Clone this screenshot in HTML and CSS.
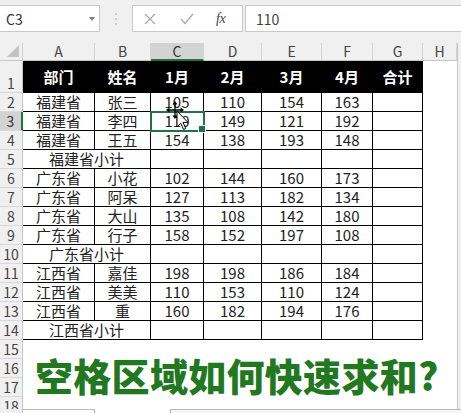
FILE: index.html
```html
<!DOCTYPE html>
<html lang="zh-CN">
<head>
<meta charset="utf-8">
<title>空格区域如何快速求和</title>
<link rel="stylesheet" href="styles.css">
</head>
<body>
<div class="app">
  <div class="formula-bar">
    <div class="name-box"><span>C3</span><span class="caret"></span></div>
    <div class="grip">
      <svg width="4" height="14" viewBox="0 0 4 14"><circle cx="2" cy="2" r="1" fill="#c4c4c4"/><circle cx="2" cy="7" r="1" fill="#c4c4c4"/><circle cx="2" cy="12" r="1" fill="#c4c4c4"/></svg>
    </div>
    <div class="fx-tools">
      <svg class="ic-x" width="12" height="12" viewBox="0 0 12 12"><path d="M1 1 L11 11 M11 1 L1 11" stroke="#ababab" stroke-width="1.3" fill="none"/></svg>
      <svg class="ic-ok" width="14" height="12" viewBox="0 0 14 12"><path d="M1 6 L5 10.5 L13 1" stroke="#ababab" stroke-width="1.4" fill="none"/></svg>
      <span class="fx">fx</span>
    </div>
    <div class="formula-input">110</div>
  </div>

  <div class="sheet">
    <div class="grid">
      <div class="corner"><span class="tri"></span></div>
      <div class="ch">A</div><div class="ch">B</div><div class="ch sel-c">C</div><div class="ch">D</div><div class="ch">E</div><div class="ch">F</div><div class="ch">G</div><div class="ch">H</div>

      <div class="rh">1</div>
      <div class="c t hd">部门</div><div class="c t hd">姓名</div><div class="c t hd">1月</div><div class="c t hd">2月</div><div class="c t hd">3月</div><div class="c t hd">4月</div><div class="c t hd">合计</div><div class="c"></div>

      <div class="rh">2</div>
      <div class="c t">福建省</div><div class="c t">张三</div><div class="c t">105</div><div class="c t">110</div><div class="c t">154</div><div class="c t">163</div><div class="c t"></div><div class="c"></div>

      <div class="rh sel-r">3</div>
      <div class="c t">福建省</div><div class="c t">李四</div><div class="c t active">110</div><div class="c t">149</div><div class="c t">121</div><div class="c t">192</div><div class="c t"></div><div class="c"></div>

      <div class="rh">4</div>
      <div class="c t">福建省</div><div class="c t">王五</div><div class="c t">154</div><div class="c t">138</div><div class="c t">193</div><div class="c t">148</div><div class="c t"></div><div class="c"></div>

      <div class="rh">5</div>
      <div class="c t m2">福建省小计</div><div class="c t"></div><div class="c t"></div><div class="c t"></div><div class="c t"></div><div class="c t"></div><div class="c"></div>

      <div class="rh">6</div>
      <div class="c t">广东省</div><div class="c t">小花</div><div class="c t">102</div><div class="c t">144</div><div class="c t">160</div><div class="c t">173</div><div class="c t"></div><div class="c"></div>

      <div class="rh">7</div>
      <div class="c t">广东省</div><div class="c t">阿呆</div><div class="c t">127</div><div class="c t">113</div><div class="c t">182</div><div class="c t">134</div><div class="c t"></div><div class="c"></div>

      <div class="rh">8</div>
      <div class="c t">广东省</div><div class="c t">大山</div><div class="c t">135</div><div class="c t">108</div><div class="c t">142</div><div class="c t">180</div><div class="c t"></div><div class="c"></div>

      <div class="rh">9</div>
      <div class="c t">广东省</div><div class="c t">行子</div><div class="c t">158</div><div class="c t">152</div><div class="c t">197</div><div class="c t">108</div><div class="c t"></div><div class="c"></div>

      <div class="rh">10</div>
      <div class="c t m2">广东省小计</div><div class="c t"></div><div class="c t"></div><div class="c t"></div><div class="c t"></div><div class="c t"></div><div class="c"></div>

      <div class="rh">11</div>
      <div class="c t">江西省</div><div class="c t">嘉佳</div><div class="c t">198</div><div class="c t">198</div><div class="c t">186</div><div class="c t">184</div><div class="c t"></div><div class="c"></div>

      <div class="rh">12</div>
      <div class="c t">江西省</div><div class="c t">美美</div><div class="c t">110</div><div class="c t">153</div><div class="c t">110</div><div class="c t">124</div><div class="c t"></div><div class="c"></div>

      <div class="rh">13</div>
      <div class="c t">江西省</div><div class="c t">重</div><div class="c t">160</div><div class="c t">182</div><div class="c t">194</div><div class="c t">176</div><div class="c t"></div><div class="c"></div>

      <div class="rh">14</div>
      <div class="c t m2">江西省小计</div><div class="c t"></div><div class="c t"></div><div class="c t"></div><div class="c t"></div><div class="c t"></div><div class="c"></div>

      <div class="rh">15</div><div class="blank"></div>
      <div class="rh">16</div><div class="blank"></div>
      <div class="rh">17</div><div class="blank"></div>
      <div class="rh">18</div><div class="blank"></div>
    </div>
    <div class="vscroll"></div>
  </div>

  <div class="tabbar">
    <span class="tb-lead"></span>
    <span class="tb-tab"></span>
    <span class="tb-gap"></span>
    <span class="tb-scroll"></span>
  </div>

  <h1 class="title">空格区域如何快速求和?</h1>

  <svg class="cursor" width="26" height="32" viewBox="0 0 26 32">
    <path d="M10 4 V16 M4 10 H16" stroke="#000" stroke-width="1.3" fill="none"/>
    <polygon points="10,1 7.5,4.5 12.5,4.5" fill="#000"/>
    <polygon points="10,19 7.5,15.5 12.5,15.5" fill="#000"/>
    <polygon points="1,10 4.5,7.5 4.5,12.5" fill="#000"/>
    <polygon points="19,10 15.5,7.5 15.5,12.5" fill="#000"/>
    <path d="M12 11 L12 27 L15.8 23.3 L18.6 29.5 L20.8 28.5 L18 22.4 L23 22.4 Z" fill="#fff" stroke="#000" stroke-width="1" stroke-linejoin="miter"/>
  </svg>
</div>
</body>
</html>
```

FILE: styles.css
```css
* { box-sizing: border-box; }

html, body {
  margin: 0;
  padding: 0;
}

body {
  width: 461px;
  height: 413px;
  overflow: hidden;
  background: #f0f0f0;
  font-family: "Noto Sans CJK SC", "Noto Sans", sans-serif;
}

.app {
  position: relative;
  width: 461px;
  height: 413px;
  display: flex;
  flex-direction: column;
  overflow: hidden;
}

/* ---------- formula bar ---------- */
.formula-bar {
  flex: none;
  height: 43px;
  display: flex;
  align-items: flex-start;
  padding-top: 5px;
}

.name-box {
  width: 100px;
  height: 27px;
  background: #fff;
  border: 1px solid #c8c8c8;
  border-left: none;
  display: flex;
  align-items: center;
  padding: 0 4px 0 6px;
  font-size: 14px;
  color: #333;
}

.caret {
  margin-left: auto;
  width: 0;
  height: 0;
  border-top: 4px solid #7d7d7d;
  border-left: 3.5px solid transparent;
  border-right: 3.5px solid transparent;
}

.grip {
  width: 32px;
  height: 27px;
  display: flex;
  align-items: center;
  justify-content: center;
}

.fx-tools {
  width: 111px;
  height: 27px;
  background: #fff;
  border: 1px solid #c8c8c8;
  display: flex;
  align-items: center;
  padding-left: 11px;
}

.ic-x { margin-right: 24px; }
.ic-ok { margin-right: 22px; }

.fx {
  font-family: "Liberation Serif", serif;
  font-style: italic;
  font-size: 14px;
  color: #444;
  letter-spacing: -0.5px;
}

.formula-input {
  flex: 1;
  margin-left: 2px;
  margin-right: -4px;
  height: 27px;
  background: #fff;
  border: 1px solid #c8c8c8;
  display: flex;
  align-items: center;
  padding-left: 10px;
  font-size: 14px;
  color: #444;
}

/* ---------- sheet ---------- */
.sheet {
  flex: 1;
  min-height: 0;
  display: flex;
}

.grid {
  display: grid;
  grid-template-columns: 23px 72px 56px 53px 58px 60px 51px 50px 34px;
  grid-template-rows: 18px 32px repeat(17, 19px);
  align-content: start;
  align-self: flex-start;
  background: #fff;
}

.vscroll {
  width: 4px;
  border-left: 1px solid #c6c6c6;
  background: #f0f0f0;
}

.corner {
  background: #f0f0f0;
  border-right: 1px solid #d0d0d0;
  border-bottom: 1px solid #c6c6c6;
  display: flex;
  justify-content: flex-end;
  align-items: flex-end;
  padding: 0 3px 3px 0;
}

.tri {
  width: 0;
  height: 0;
  border-bottom: 12px solid #c2c2c2;
  border-left: 12px solid transparent;
}

.ch {
  background: #f0f0f0;
  border-right: 1px solid #d4d4d4;
  border-bottom: 1px solid #c6c6c6;
  display: flex;
  align-items: center;
  justify-content: center;
  font-size: 14px;
  color: #444;
  line-height: 17px;
}

.ch.sel-c {
  background: #d3d3d3;
  border-bottom: 2px solid #217346;
  color: #333;
}

.rh {
  background: #f0f0f0;
  border-right: 1px solid #c6c6c6;
  border-bottom: 1px solid #d8d8d8;
  display: flex;
  align-items: flex-end;
  justify-content: center;
  font-size: 14px;
  line-height: 18px;
  color: #444;
}

.rh.sel-r {
  background: #d3d3d3;
  border-right: 2px solid #217346;
  color: #333;
}

.c {
  display: flex;
  align-items: center;
  justify-content: center;
  font-size: 15px;
  line-height: 18px;
  color: #222;
  white-space: nowrap;
}

.t {
  border-right: 1px solid #000;
  border-bottom: 1px solid #000;
}

.hd {
  background: #000;
  color: #fff;
  font-weight: 700;
}

.m2 { grid-column: span 2; }

.blank { grid-column: span 8; }

.active {
  position: relative;
  outline: 2px solid #217346;
  outline-offset: -1px;
  z-index: 2;
}

.active::after {
  content: "";
  position: absolute;
  right: -3px;
  bottom: -3px;
  width: 6px;
  height: 6px;
  background: #217346;
  border: 1px solid #fff;
}

/* ---------- bottom strip ---------- */
.tabbar {
  flex: none;
  height: 4px;
  display: flex;
  background: #fff;
  position: relative;
  z-index: 1;
}

.tb-lead { width: 23px; background: #f0f0f0; border-right: 1px solid #c6c6c6; }
.tb-tab { width: 72px; border-top: 1px solid #b8b8b8; border-right: 1px solid #b8b8b8; background: #fff; }
.tb-gap { width: 75px; background: #fff; }
.tb-scroll { flex: 1; border-top: 1px solid #b8b8b8; border-left: 1px solid #b8b8b8; background: #f5f5f5; }

/* ---------- overlays ---------- */
.title {
  position: absolute;
  left: 35px;
  top: 356px;
  margin: 0;
  font-family: "Noto Sans CJK SC", sans-serif;
  font-size: 38px;
  line-height: 38px;
  font-weight: 900;
  color: #22781f;
  white-space: nowrap;
  letter-spacing: 0.3px;
  z-index: 3;
}

.cursor {
  position: absolute;
  left: 165px;
  top: 100px;
  z-index: 3;
}
```
